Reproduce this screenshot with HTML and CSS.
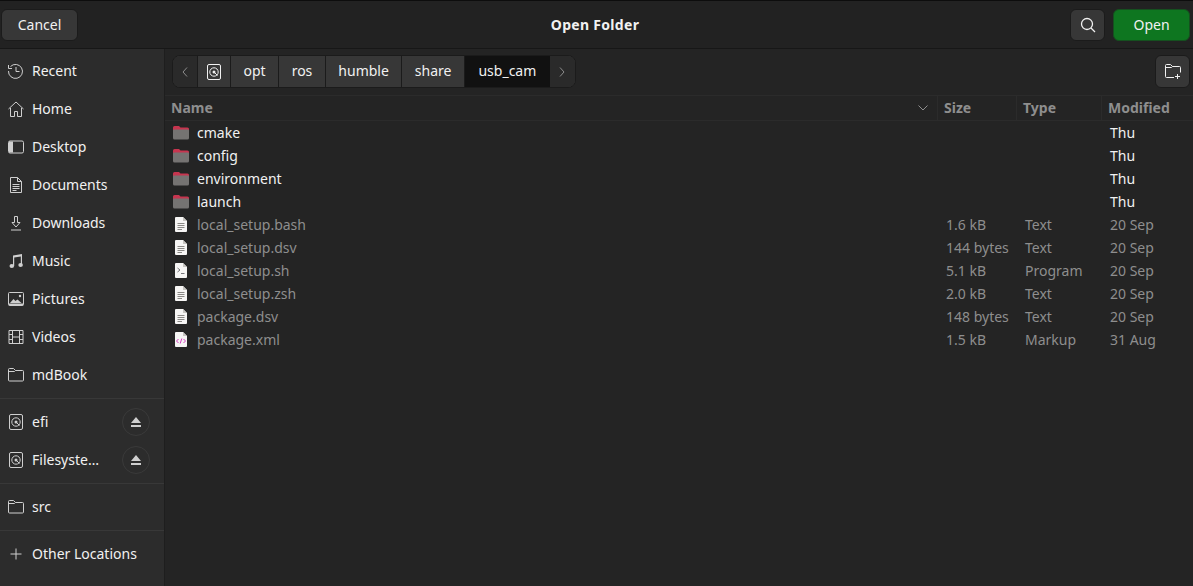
FILE: index.html
```html
<!DOCTYPE html>
<html lang="en">
<head>
  <meta charset="UTF-8">
  <title>Open Folder</title>
  <link rel="stylesheet" href="styles.css">
</head>
<body>

  <svg class="defs" width="0" height="0">
    <symbol id="i-disk" viewBox="0 0 16 16">
      <rect x="1.5" y="0.5" width="13" height="15" rx="1.5" fill="none" stroke="currentColor"/>
      <circle cx="8" cy="8" r="4.2" fill="none" stroke="currentColor"/>
      <circle cx="8" cy="8" r="1.5" fill="currentColor"/>
      <path d="M8 8l3.500 3.500" stroke="currentColor"/>
    </symbol>
    <symbol id="i-folder" viewBox="0 0 16 14">
      <path d="M1.500.5h4l2 2h7a1 1 0 0 1 1 1v8.500a1 1 0 0 1-1 1h-13a1 1 0 0 1-1-1v-10.500a1 1 0 0 1 1-1zM.5 3.500h6l1-1" fill="none" stroke="currentColor"/>
    </symbol>
    <symbol id="i-dir" viewBox="0 0 16 14">
      <path d="M1.500 0h4.500l1.500 1.500h7a1.500 1.500 0 0 1 1.500 1.500v2h-16v-3.500a1.500 1.500 0 0 1 1.500-1.500z" fill="#c7354f"/>
      <path d="M0 4.500a1 1 0 0 1 1-1h14a1 1 0 0 1 1 1v7.500a1.500 1.500 0 0 1-1.500 1.500h-13a1.500 1.500 0 0 1-1.500-1.500z" fill="#757372"/>
    </symbol>
    <symbol id="i-text" viewBox="0 0 12 15">
      <path d="M1 0h7l4 4v10a1 1 0 0 1-1 1h-10a1 1 0 0 1-1-1v-13a1 1 0 0 1 1-1z" fill="#f6f5f4"/>
      <path d="M8 0l4 4h-4z" fill="#c6c4c0"/>
      <path d="M2.500 6.500h7M2.500 8.500h7M2.500 10.500h7M2.500 12.500h4.500" stroke="#8a8885"/>
    </symbol>
    <symbol id="i-prog" viewBox="0 0 12 15">
      <path d="M1 0h7l4 4v10a1 1 0 0 1-1 1h-10a1 1 0 0 1-1-1v-13a1 1 0 0 1 1-1z" fill="#f6f5f4"/>
      <path d="M8 0l4 4h-4z" fill="#c6c4c0"/>
      <path d="M2.500 5l2.500 2-2.500 2M6 10.500h3.500" fill="none" stroke="#77767b"/>
    </symbol>
    <symbol id="i-xml" viewBox="0 0 12 15">
      <path d="M1 0h7l4 4v10a1 1 0 0 1-1 1h-10a1 1 0 0 1-1-1v-13a1 1 0 0 1 1-1z" fill="#f6f5f4"/>
      <path d="M8 0l4 4h-4z" fill="#c6c4c0"/>
      <path d="M3.500 7l-2 2 2 2M8.500 7l2 2-2 2M6.800 6.500l-1.600 5" fill="none" stroke="#d53fc0"/>
    </symbol>
    <symbol id="i-eject" viewBox="0 0 12 12">
      <path d="M6 1l5 6h-10zM1 9h10v2h-10z" fill="currentColor"/>
    </symbol>
  </svg>

  <header class="titlebar">
    <button class="btn btn-cancel"><span class="label">Cancel</span></button>
    <div class="title">Open Folder</div>
    <button class="btn btn-icon" aria-label="Search">
      <svg width="16" height="16" viewBox="0 0 16 16" fill="none" stroke="currentColor" stroke-width="1.300"><circle cx="7" cy="7" r="5.500"/><path d="M11 11l4 4"/></svg>
    </button>
    <button class="btn btn-open"><span class="label">Open</span></button>
  </header>

  <div class="dialog">
    <nav class="sidebar">
      <div class="group">
        <a class="place">
          <svg class="icon" viewBox="0 0 16 16" fill="none" stroke="currentColor"><path d="M2.500 3.500a7 7 0 1 1-2 4.500"/><path d="M.5 2v3.500h3.500" stroke-width="1"/><path d="M8 4v4.500h3.500"/></svg>
          <span class="label">Recent</span>
        </a>
        <a class="place">
          <svg class="icon" viewBox="0 0 16 16" fill="none" stroke="currentColor"><path d="M.5 8l7.500-7 7.500 7"/><path d="M2.500 7v8.500h4v-5h3v5h4v-8.500"/></svg>
          <span class="label">Home</span>
        </a>
        <a class="place">
          <svg class="icon" viewBox="0 0 16 14" fill="none" stroke="currentColor"><rect x=".5" y="1" width="15" height="12" rx="1.500"/><path d="M1 1.500h4v11h-4z" fill="currentColor" stroke="none"/></svg>
          <span class="label">Desktop</span>
        </a>
        <a class="place">
          <svg class="icon" viewBox="0 0 16 16" fill="none" stroke="currentColor"><path d="M2.500.5h7l4 4v11h-11z"/><path d="M9.500.5v4h4M4.500 7.500h7M4.500 9.500h7M4.500 11.500h7M4.500 13.500h4"/></svg>
          <span class="label">Documents</span>
        </a>
        <a class="place">
          <svg class="icon" viewBox="0 0 16 16" fill="none" stroke="currentColor"><path d="M6.500 1.500h3v6h2.500l-4 4.500-4-4.500h2.500zM3 15h10"/></svg>
          <span class="label">Downloads</span>
        </a>
        <a class="place">
          <svg class="icon" viewBox="0 0 16 16"><path d="M5 2.500l9-1.500v11h-1.200v-8.500l-6.600 1.100v8.400h-1.200z" fill="currentColor"/><ellipse cx="3.800" cy="13" rx="2.300" ry="2" fill="currentColor"/><ellipse cx="12.600" cy="12" rx="2.300" ry="2" fill="currentColor"/></svg>
          <span class="label">Music</span>
        </a>
        <a class="place">
          <svg class="icon" viewBox="0 0 16 14" fill="none" stroke="currentColor"><rect x=".5" y=".5" width="15" height="13" rx="1"/><path d="M2 11l3.500-4 2 2 2-1.500 4 3.500z" fill="currentColor" stroke="none"/><circle cx="12" cy="4" r="1.200" fill="currentColor" stroke="none"/><path d="M1 11.500h14v2h-14z" fill="currentColor" stroke="none"/></svg>
          <span class="label">Pictures</span>
        </a>
        <a class="place">
          <svg class="icon" viewBox="0 0 16 14" fill="none" stroke="currentColor"><path d="M1 .5h14v13h-14zM4.500.5v13M11.500.5v13M1 4.500h3.500M1 9.500h3.500M11.500 4.500h3.500M11.500 9.500h3.500M4.500 7h7"/></svg>
          <span class="label">Videos</span>
        </a>
        <a class="place">
          <svg class="icon"><use href="#i-folder"/></svg>
          <span class="label">mdBook</span>
        </a>
      </div>
      <div class="group">
        <a class="place">
          <svg class="icon"><use href="#i-disk"/></svg>
          <span class="label">efi</span>
          <span class="eject"><svg width="12" height="12"><use href="#i-eject"/></svg></span>
        </a>
        <a class="place">
          <svg class="icon"><use href="#i-disk"/></svg>
          <span class="label">Filesyste…</span>
          <span class="eject"><svg width="12" height="12"><use href="#i-eject"/></svg></span>
        </a>
      </div>
      <div class="group">
        <a class="place">
          <svg class="icon"><use href="#i-folder"/></svg>
          <span class="label">src</span>
        </a>
      </div>
      <div class="group">
        <a class="place">
          <svg class="icon" viewBox="0 0 16 16" fill="none" stroke="currentColor"><path d="M8 2.500v11M2.500 8h11"/></svg>
          <span class="label">Other Locations</span>
        </a>
      </div>
    </nav>

    <main class="browser">
      <div class="toolbar">
        <div class="pathbar">
          <span class="crumb crumb-arrow">
            <svg width="8" height="12" viewBox="0 0 8 12" fill="none" stroke="currentColor"><path d="M6 1.500l-4 4.500 4 4.500"/></svg>
          </span>
          <span class="crumb crumb-disk"><svg width="16" height="16"><use href="#i-disk"/></svg></span>
          <span class="crumb"><span class="label">opt</span></span>
          <span class="crumb"><span class="label">ros</span></span>
          <span class="crumb"><span class="label">humble</span></span>
          <span class="crumb"><span class="label">share</span></span>
          <span class="crumb crumb-current"><span class="label">usb_cam</span></span>
          <span class="crumb crumb-arrow">
            <svg width="8" height="12" viewBox="0 0 8 12" fill="none" stroke="currentColor"><path d="M2 1.500l4 4.500-4 4.500"/></svg>
          </span>
        </div>
        <button class="btn btn-newfolder" aria-label="New folder">
          <svg width="16" height="15" viewBox="0 0 16 15" fill="none" stroke="currentColor"><path d="M9 13.500h-7.500a1 1 0 0 1-1-1v-11a1 1 0 0 1 1-1h4l2 2h7a1 1 0 0 1 1 1v5M.5 3.500h6l1-1M12.500 10v5M10 12.500h5"/></svg>
        </button>
      </div>

      <div class="columns">
        <div class="col-name"><span class="label">Name</span>
          <svg width="12" height="8" viewBox="0 0 12 8" fill="none" stroke="currentColor"><path d="M1.500 1.500l4.500 4.500 4.500-4.500"/></svg>
        </div>
        <div class="col"><span class="label">Size</span></div>
        <div class="col"><span class="label">Type</span></div>
        <div class="col"><span class="label">Modified</span></div>
      </div>

      <div class="files">
        <div class="row"><span class="name"><svg class="ficon"><use href="#i-dir"/></svg>cmake</span><span></span><span></span><span class="date">Thu</span></div>
        <div class="row"><span class="name"><svg class="ficon"><use href="#i-dir"/></svg>config</span><span></span><span></span><span class="date">Thu</span></div>
        <div class="row"><span class="name"><svg class="ficon"><use href="#i-dir"/></svg>environment</span><span></span><span></span><span class="date">Thu</span></div>
        <div class="row"><span class="name"><svg class="ficon"><use href="#i-dir"/></svg>launch</span><span></span><span></span><span class="date">Thu</span></div>
        <div class="row dim"><span class="name"><svg class="ficon doc"><use href="#i-text"/></svg>local_setup.bash</span><span>1.6 kB</span><span>Text</span><span>20 Sep</span></div>
        <div class="row dim"><span class="name"><svg class="ficon doc"><use href="#i-text"/></svg>local_setup.dsv</span><span>144 bytes</span><span>Text</span><span>20 Sep</span></div>
        <div class="row dim"><span class="name"><svg class="ficon doc"><use href="#i-prog"/></svg>local_setup.sh</span><span>5.1 kB</span><span>Program</span><span>20 Sep</span></div>
        <div class="row dim"><span class="name"><svg class="ficon doc"><use href="#i-text"/></svg>local_setup.zsh</span><span>2.0 kB</span><span>Text</span><span>20 Sep</span></div>
        <div class="row dim"><span class="name"><svg class="ficon doc"><use href="#i-text"/></svg>package.dsv</span><span>148 bytes</span><span>Text</span><span>20 Sep</span></div>
        <div class="row dim"><span class="name"><svg class="ficon doc"><use href="#i-xml"/></svg>package.xml</span><span>1.5 kB</span><span>Markup</span><span>31 Aug</span></div>
      </div>
    </main>
  </div>

</body>
</html>
```

FILE: styles.css
```css
* {
  box-sizing: border-box;
}

html, body {
  height: 100%;
}

body {
  margin: 0;
  display: flex;
  flex-direction: column;
  height: 586px;
  overflow: hidden;
  background: #242424;
  color: #f1f1f1;
  font-family: "Noto Sans", "Open Sans", sans-serif;
  font-size: 14px;
}

.defs {
  position: absolute;
}

/* lifts text a pixel, the font sits lower than the one in the dialog */
.label {
  padding-bottom: 2px;
}

/* title bar */
.titlebar {
  display: flex;
  align-items: flex-start;
  gap: 8px;
  height: 49px;
  padding: 8px 3px 0 1px;
  border-top: 1px solid #0d0d0d;
  border-bottom: 1px solid #171717;
  background: #222;
}

.title {
  flex: 1;
  height: 32px;
  line-height: 32px;
  text-align: center;
  font-weight: 700;
  letter-spacing: .3px;
  padding-left: 42px;
}

.btn {
  display: flex;
  align-items: center;
  justify-content: center;
  height: 32px;
  padding: 0;
  border: 1px solid #1b1b1b;
  border-radius: 6px;
  background: #373737;
  color: #f1f1f1;
  font: inherit;
}

.btn-cancel {
  width: 77px;
}

.btn-icon {
  width: 35px;
}

.btn-open {
  width: 77px;
  background: #0e7620;
  border-color: #15501f;
}

.btn-newfolder {
  width: 35px;
  height: 33px;
}

.dialog {
  flex: 1;
  display: flex;
  min-height: 0;
}

/* places */
.sidebar {
  width: 165px;
  flex: none;
  background: #2c2c2c;
  border-right: 1px solid #1e1e1e;
  padding-top: 3px;
}

.group + .group {
  border-top: 1px solid #383838;
  padding-top: 4px;
  margin-top: 4px;
}

.place {
  display: flex;
  align-items: center;
  height: 38px;
  padding-left: 8px;
  color: #f1f1f1;
}

.icon {
  width: 16px;
  height: 16px;
  flex: none;
  margin-right: 8px;
  color: #cfcfcf;
}

.eject {
  display: flex;
  align-items: center;
  justify-content: center;
  width: 28px;
  height: 28px;
  margin-left: auto;
  margin-right: 14px;
  border: 1px solid #3a3a3a;
  border-radius: 50%;
  color: #cfcfcf;
}

/* file browser */
.browser {
  flex: 1;
  min-width: 0;
}

.toolbar {
  display: flex;
  justify-content: space-between;
  align-items: flex-start;
  height: 46px;
  padding: 6px 3px 0 7px;
}

.pathbar {
  display: flex;
  height: 33px;
  border: 1px solid #1b1b1b;
  border-radius: 8px;
  overflow: hidden;
  background: #373737;
}

.crumb {
  display: flex;
  align-items: center;
  justify-content: center;
  padding: 0 12.5px;
  border-right: 1px solid #1b1b1b;
}

.crumb-arrow {
  width: 25px;
  padding: 0;
  background: #2a2a2a;
  color: #8c8c8c;
}

.crumb-arrow:last-child {
  border-right: none;
}

.crumb-disk {
  width: 33px;
  padding: 0;
}

.crumb-current {
  padding: 0 13.5px;
  background: #111;
  border-right: none;
}

.columns {
  display: grid;
  grid-template-columns: 772px 79px 85px 1fr;
  height: 26px;
  border-top: 1px solid #2b2b2b;
  border-bottom: 1px solid #2b2b2b;
  color: #8e8e8e;
  font-weight: 700;
}

.col-name,
.col {
  display: flex;
  align-items: center;
  padding-left: 6px;
}

.col-name {
  justify-content: space-between;
  padding-right: 8px;
}

.col {
  border-left: 1px solid #2b2b2b;
}

.row {
  display: grid;
  grid-template-columns: 772px 79px 85px 1fr;
  align-items: center;
  height: 23px;
}

.row > span:nth-child(2) {
  padding-left: 9px;
}

.row > span:nth-child(3) {
  padding-left: 9px;
}

.row > span:nth-child(4) {
  padding-left: 9px;
}

.row .name {
  display: flex;
  align-items: center;
  padding-left: 8px;
}

.dim {
  color: #8e8e8e;
}

.ficon {
  width: 16px;
  height: 14px;
  margin-right: 8px;
  flex: none;
}

.ficon.doc {
  height: 15px;
  width: 12px;
  margin: 0 10px 0 2px;
}

.date {
  color: #f1f1f1;
}
```
